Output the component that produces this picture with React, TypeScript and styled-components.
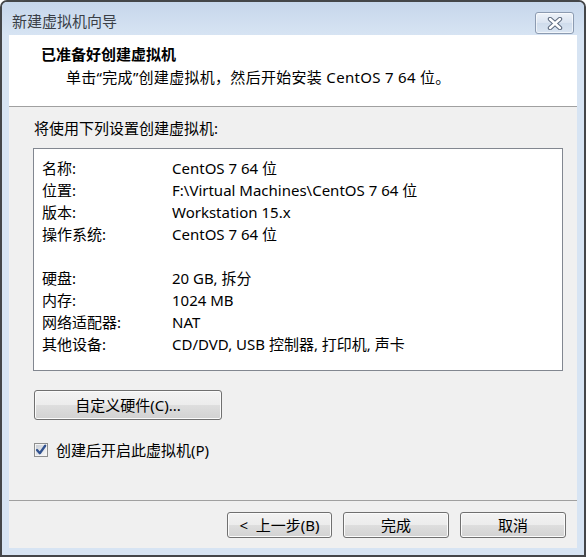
import React, { FC } from "react";
import styled, { createGlobalStyle } from "styled-components";

const GlobalStyle = createGlobalStyle`
  html, body {
    margin: 0;
    padding: 0;
    background: #ffffff;
  }
  * {
    box-sizing: border-box;
  }
`;

const FONT = `"Noto Sans", "Noto Sans CJK SC", sans-serif`;

const Window = styled.div`
  width: 586px;
  height: 557px;
  border: 2px solid #444649;
  border-radius: 7px 7px 0 0;
  background: #d7e4f3;
  display: flex;
  flex-direction: column;
  font-family: ${FONT};
  font-size: 15px;
  color: #000;
  overflow: hidden;
`;

const TitleBar = styled.div`
  height: 33px;
  display: flex;
  align-items: center;
  padding: 0 10px;
  background: linear-gradient(#c6d6eb, #d7e4f3);
`;

const TitleText = styled.div`
  flex: 1;
  color: #3a3f47;
  line-height: 20px;
  padding-top: 4px;
`;

const CloseButton = styled.div`
  align-self: flex-start;
  margin-top: 10px;
  width: 39px;
  height: 22px;
  border: 1px solid #8c9bb1;
  border-radius: 3px;
  background: linear-gradient(#eef3f9, #dae4f1 50%, #cfdcec 51%, #dbe6f3);
  box-shadow: inset 0 0 0 1px rgba(255, 255, 255, 0.6);
  display: flex;
  align-items: center;
  justify-content: center;
`;

const Frame = styled.div`
  flex: 1;
  padding: 0 7px 7px 7px;
  display: flex;
`;

const Client = styled.div`
  flex: 1;
  background: #f0f0f0;
  display: flex;
  flex-direction: column;
`;

const Header = styled.div`
  height: 72px;
  background: #ffffff;
  border-bottom: 1px solid #a0a0a0;
  padding: 9px 0 0 32px;
`;

const HeaderTitle = styled.div`
  font-weight: bold;
  line-height: 20px;
`;

const HeaderSubtitle = styled.div`
  margin-top: 3px;
  padding-left: 25px;
  line-height: 20px;
  letter-spacing: 0.3px;
`;

const Content = styled.div`
  padding: 11px 14px 0 24px;
  display: flex;
  flex-direction: column;
  align-items: flex-start;
`;

const Intro = styled.div`
  padding-left: 1px;
  line-height: 20px;
`;

const SummaryBox = styled.div`
  margin-top: 10px;
  width: 530px;
  height: 223px;
  border: 1px solid #828790;
  background: #ffffff;
  padding: 8px 8px;
`;

const Row = styled.div`
  display: grid;
  grid-template-columns: 130px 1fr;
  line-height: 22px;
  height: 22px;
  white-space: nowrap;
`;

const Button = styled.button<{ $width: number; $height: number }>`
  width: ${(p) => p.$width}px;
  height: ${(p) => p.$height}px;
  border: 1px solid #707070;
  border-radius: 3px;
  background: linear-gradient(#f3f3f3, #ececec 50%, #dedede 51%, #d2d2d2);
  box-shadow: inset 0 0 0 1px #fbfbfb;
  font-family: ${FONT};
  font-size: 15px;
  color: #000;
  padding: 0;
  line-height: 20px;
  white-space: pre;
`;

const CustomButton = styled(Button)`
  margin-top: 19px;
  margin-left: 1px;
`;

const CheckRow = styled.label`
  margin-top: 20px;
  margin-left: 1px;
  height: 20px;
  display: flex;
  align-items: center;
  gap: 8px;
  line-height: 20px;
`;

const Footer = styled.div`
  margin-top: auto;
  border-top: 1px solid #a0a0a0;
  padding: 11px 11px 10px 0;
  display: flex;
  justify-content: flex-end;
  gap: 11px;
`;

const CloseGlyph: FC = () => (
  <svg width="16" height="13" viewBox="0 0 16 13">
    <path d="M3 2 L13 11 M13 2 L3 11" stroke="#5d6a7e" strokeWidth="4.4" strokeLinecap="round" />
    <path d="M3 2 L13 11 M13 2 L3 11" stroke="#ffffff" strokeWidth="2.4" strokeLinecap="round" />
  </svg>
);

const CheckBox: FC = () => (
  <svg width="14" height="14" viewBox="0 0 14 14">
    <defs>
      <linearGradient id="cbInner" x1="0" y1="0" x2="1" y2="1">
        <stop offset="0" stopColor="#c9ced6" />
        <stop offset="1" stopColor="#f8f8f8" />
      </linearGradient>
    </defs>
    <rect x="0.5" y="0.5" width="13" height="13" fill="#f4f4f4" stroke="#8e8f8f" />
    <rect x="2" y="2" width="10" height="10" fill="url(#cbInner)" />
    <path
      d="M3 7 L5.8 10.2 L11.2 2.8"
      fill="none"
      stroke="#31528f"
      strokeWidth="2.3"
      strokeLinejoin="round"
      strokeLinecap="round"
    />
  </svg>
);

type Item = { label: string; value: string } | null;

const items: Item[] = [
  { label: "名称:", value: "CentOS 7 64 位" },
  { label: "位置:", value: "F:\\Virtual Machines\\CentOS 7 64 位" },
  { label: "版本:", value: "Workstation 15.x" },
  { label: "操作系统:", value: "CentOS 7 64 位" },
  null,
  { label: "硬盘:", value: "20 GB, 拆分" },
  { label: "内存:", value: "1024 MB" },
  { label: "网络适配器:", value: "NAT" },
  { label: "其他设备:", value: "CD/DVD, USB 控制器, 打印机, 声卡" },
];

const App: FC = () => {
  return (
    <>
      <GlobalStyle />
      <Window>
        <TitleBar>
          <TitleText>新建虚拟机向导</TitleText>
          <CloseButton>
            <CloseGlyph />
          </CloseButton>
        </TitleBar>
        <Frame>
          <Client>
            <Header>
              <HeaderTitle>已准备好创建虚拟机</HeaderTitle>
              <HeaderSubtitle>单击“完成”创建虚拟机，然后开始安装 CentOS 7 64 位。</HeaderSubtitle>
            </Header>
            <Content>
              <Intro>将使用下列设置创建虚拟机:</Intro>
              <SummaryBox>
                {items.map((item, i) =>
                  item ? (
                    <Row key={i}>
                      <span>{item.label}</span>
                      <span>{item.value}</span>
                    </Row>
                  ) : (
                    <Row key={i} />
                  )
                )}
              </SummaryBox>
              <CustomButton $width={188} $height={30}>
                自定义硬件(C)...
              </CustomButton>
              <CheckRow>
                <CheckBox />
                <span>创建后开启此虚拟机(P)</span>
              </CheckRow>
            </Content>
            <Footer>
              <Button $width={105} $height={26}>
                {"<  上一步(B)"}
              </Button>
              <Button $width={106} $height={26}>
                完成
              </Button>
              <Button $width={106} $height={26}>
                取消
              </Button>
            </Footer>
          </Client>
        </Frame>
      </Window>
    </>
  );
};

export default App;
